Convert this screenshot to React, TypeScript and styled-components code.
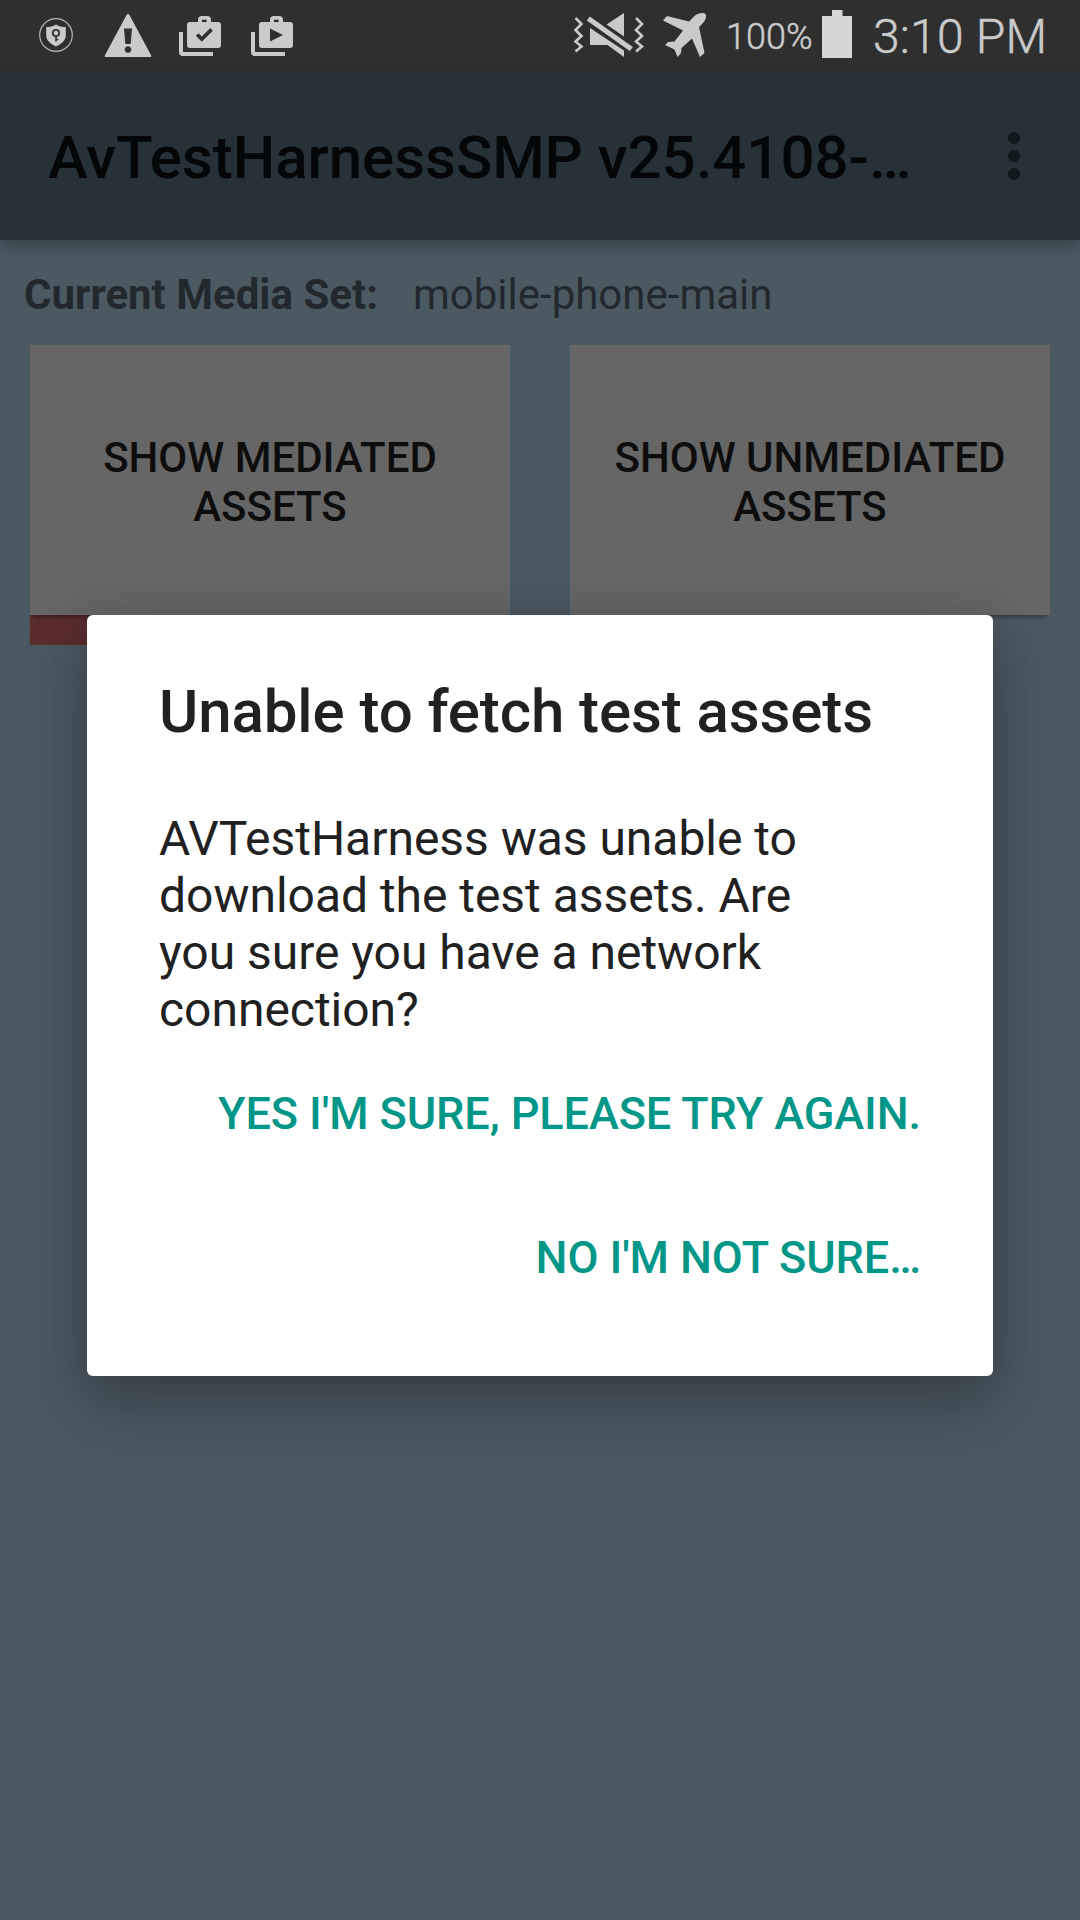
import React from 'react';
import styled, { createGlobalStyle } from 'styled-components';

const Global = createGlobalStyle`
  * { box-sizing: border-box; }
  body { margin: 0; background: #4b5963; font-family: Roboto, sans-serif; }
`;

const Screen = styled.div`
  position: relative;
  display: flex;
  flex-direction: column;
  width: 1080px;
  height: 1920px;
  overflow: hidden;
  background: #4b5963;
`;

const StatusBar = styled.header`
  display: flex;
  justify-content: space-between;
  height: 72px;
  padding: 0 32px 0 36px;
  background: #2f2f2f;
  color: #cacaca;
`;

const StatusGroup = styled.div`
  display: flex;
  align-items: center;
`;

const Glyph = styled.svg<{ $w: number; $ml?: number }>`
  display: block;
  flex: none;
  width: ${(p) => p.$w}px;
  height: 72px;
  margin-left: ${(p) => p.$ml ?? 0}px;
  fill: #cacaca;
`;

const StatusText = styled.span<{ $size: number; $ml: number; $w: number; $ls?: number }>`
  width: ${(p) => p.$w}px;
  margin-left: ${(p) => p.$ml}px;
  padding-top: 1px;
  font-size: ${(p) => p.$size}px;
  font-weight: 300;
  -webkit-text-stroke: 0.5px #cacaca;
  letter-spacing: ${(p) => p.$ls ?? 0}px;
  line-height: 72px;
  height: 72px;
  white-space: nowrap;
`;

const Toolbar = styled.div`
  position: relative;
  display: flex;
  align-items: center;
  justify-content: space-between;
  height: 168px;
  padding: 0 57px 0 48px;
  background: #273238;
  box-shadow: 0 6px 14px rgba(0, 0, 0, 0.26);
`;

const Title = styled.h1`
  width: 866px;
  margin: 0;
  padding-top: 4px;
  font-size: 60px;
  font-weight: 500;
  line-height: 70px;
  letter-spacing: -0.03px;
  color: #040607;
  white-space: nowrap;
`;

const Overflow = styled.button`
  display: flex;
  flex-direction: column;
  gap: 6px;
  padding: 0 3px 0 0;
  border: 0;
  background: none;
`;

const Dot = styled.i`
  width: 12px;
  height: 12px;
  border-radius: 50%;
  background: #12191c;
`;

const MediaSet = styled.div`
  display: flex;
  gap: 35px;
  height: 105px;
  padding: 30px 24px 0;
  font-size: 42px;
  line-height: 49px;
  color: #22292e;
`;

const Label = styled.span`
  font-weight: 700;
`;

const Cards = styled.main`
  display: grid;
  grid-template-columns: 480px 480px;
  gap: 60px;
  padding: 0 30px;
`;

const Column = styled.div`
  display: flex;
  flex-direction: column;
`;

const Card = styled.button`
  height: 270px;
  border: 0;
  padding: 4px 0 0;
  background: #666;
  color: #0d0d0d;
  font: 500 42px/49px Roboto, sans-serif;
  box-shadow: 0 5px 4px -3px rgba(0, 0, 0, 0.35);
  z-index: 1;
`;

const Accent = styled.div`
  height: 30px;
  background: #5c2d2e;
`;

const Dialog = styled.section`
  position: absolute;
  z-index: 2;
  top: 615px;
  left: 87px;
  display: flex;
  flex-direction: column;
  width: 906px;
  height: 761px;
  padding: 62px 72px 0;
  border-radius: 6px;
  background: #fff;
  color: #212121;
  box-shadow: 0 30px 64px rgba(0, 0, 0, 0.26), 0 0 40px rgba(0, 0, 0, 0.1);
`;

const DialogTitle = styled.h2`
  margin: 0;
  font-size: 60px;
  font-weight: 500;
  line-height: 70px;
  letter-spacing: -0.09px;
  white-space: nowrap;
`;

const Message = styled.p`
  margin: 63px 0 0;
  font-size: 48px;
  line-height: 57px;
  letter-spacing: -0.03px;
  white-space: nowrap;
`;

const Actions = styled.div`
  display: flex;
  flex-direction: column;
  align-items: flex-end;
  padding-top: 3px;
`;

const Action = styled.button`
  height: 144px;
  padding: 0;
  border: 0;
  background: none;
  color: #009688;
  font: 500 45px/53px Roboto, sans-serif;
  letter-spacing: -0.08px;
  white-space: nowrap;
`;

export default function App() {
  return (
    <Screen>
      <Global />
      <StatusBar>
        <StatusGroup>
          <Glyph $w={40} viewBox="36 0 40 72">
            <circle cx="56" cy="35" r="16.3" fill="none" stroke="#b4b4b4" strokeWidth="1.2" />
            <path d="M56 24.6c2.500 2 6 2.700 9.800 2.400v8.500c0 5-4.500 8.500-9.800 11-5.300-2.500-9.800-6-9.800-11V27c3.800.3 7.300-.4 9.800-2.400z" />
            <circle cx="56" cy="33" r="3.200" fill="none" stroke="#333" strokeWidth="1.800" />
            <path d="M56 36v5.500M56 39.500h2.300" fill="none" stroke="#333" strokeWidth="1.600" />
          </Glyph>
          <Glyph $w={48} $ml={28} viewBox="104 0 48 72">
            <path fillRule="evenodd" d="M128 14q1 0 1.600 1.200l21.600 40.300q.6 1.500-.8 1.500h-44.800q-1.400 0-.8-1.500l21.600-40.300Q127 14 128 14zM124 28.500l1.300 15.500h5.400l1.300-15.500zM128 46.200a3.300 3.300 0 1 0 .01 0z" />
          </Glyph>
          <Glyph $w={44} $ml={26} viewBox="178 0 44 72">
            <path d="M179 32h4v20h30v4h-30q-4 0-4-4z" />
            <path fillRule="evenodd" d="M190 22h8v-2q0-4 4-4h5q4 0 4 4v2h7q3 0 3 3v20q0 3-3 3h-28q-3 0-3-3v-20q0-3 3-3zM202 19.800v2.200h4.500v-2.200zM198.500 33.200l-2.700 2.500 6 6 11-11-2.500-2.600-8.500 8.400z" />
          </Glyph>
          <Glyph $w={44} $ml={28} viewBox="250 0 44 72">
            <path d="M251 32h4v20h30v4h-30q-4 0-4-4z" />
            <path fillRule="evenodd" d="M262 22h8v-2q0-4 4-4h5q4 0 4 4v2h7q3 0 3 3v20q0 3-3 3h-28q-3 0-3-3v-20q0-3 3-3zM274 19.800v2.200h4.500v-2.200zM270 28.500v13l13-6.500z" />
          </Glyph>
        </StatusGroup>
        <StatusGroup>
          <Glyph $w={72} viewBox="573 0 72 72">
            <path d="M575.500 18l6 6-6 6 6 6-6 5.500 6 5-6 5M636 18l6 6-6 6 6 6-6 5.500 6 5-6 5" fill="none" stroke="#cacaca" strokeWidth="2.600" />
            <path d="M624 13v23.500l-17.500-12zM590 28l34 22.500V57l-16.500-12H590z" />
            <path d="M588.300 18.500l43 30.500" stroke="#cacaca" strokeWidth="5.200" />
          </Glyph>
          <Glyph $w={46} $ml={17} viewBox="662 0 46 72">
            <path d="M705.300 13.800c1.500 1.500.8 6.200-2.300 9.200l-4 4 5.500 26-4.500 4-8-18.500-10.500 9.500-.5 5-3.500 4-3-7.500-9.500-4.500 3-3 6.500-.5 8.500-11-20-10 4-4.500 22 5.500 5.500-5.500c3-3.200 9.300-3.700 10.800-2.200z" />
          </Glyph>
          <StatusText $size={36} $ml={18} $w={87}>100%</StatusText>
          <Glyph $w={30} $ml={9} viewBox="822 0 30 72">
            <path d="M822 16h10v-6h10.500v6H852v42h-30z" fill="#d6d6d6" />
          </Glyph>
          <StatusText $size={48} $ml={21} $w={175} $ls={0.2}>3:10 PM</StatusText>
        </StatusGroup>
      </StatusBar>
      <Toolbar>
        <Title>AvTestHarnessSMP v25.4108-…</Title>
        <Overflow aria-label="More options">
          <Dot />
          <Dot />
          <Dot />
        </Overflow>
      </Toolbar>
      <MediaSet>
        <Label>Current Media Set:</Label>
        <span>mobile-phone-main</span>
      </MediaSet>
      <Cards>
        <Column>
          <Card>SHOW MEDIATED<br />ASSETS</Card>
          <Accent />
        </Column>
        <Column>
          <Card>SHOW UNMEDIATED<br />ASSETS</Card>
        </Column>
      </Cards>
      <Dialog role="dialog">
        <DialogTitle>Unable to fetch test assets</DialogTitle>
        <Message>
          AVTestHarness was unable to<br />
          download the test assets. Are<br />
          you sure you have a network<br />
          connection?
        </Message>
        <Actions>
          <Action>YES I'M SURE, PLEASE TRY AGAIN.</Action>
          <Action>NO I'M NOT SURE…</Action>
        </Actions>
      </Dialog>
    </Screen>
  );
}
